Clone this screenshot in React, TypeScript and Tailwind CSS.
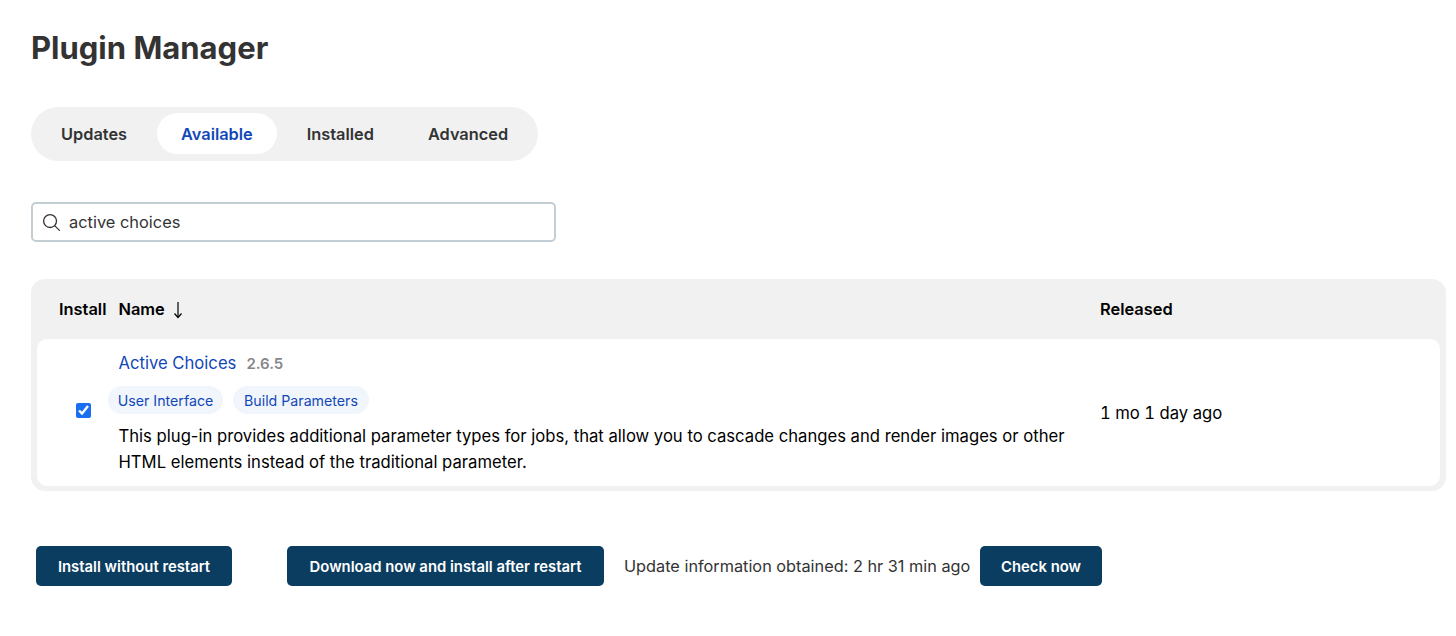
import { IoSearchOutline } from 'react-icons/io5'

const tabs = ['Updates', 'Available', 'Installed', 'Advanced']

function Tabs() {
  return (
    <div className="flex h-[54px] w-[507px] items-center gap-[6px] rounded-[27px] bg-[#f1f1f1] px-[6px] pb-px">
      {tabs.map((tab) => (
        <div
          key={tab}
          className={
            tab === 'Available'
              ? 'flex h-[41px] items-center rounded-[21px] bg-white px-6 pt-[2px] text-[#1148b8]'
              : 'flex h-[41px] items-center rounded-[21px] px-6 pt-[2px] text-[#333333]'
          }
        >
          {tab}
        </div>
      ))}
    </div>
  )
}

function Tag({ label, className }: { label: string; className: string }) {
  return (
    <span className={`flex h-[28px] items-center justify-center rounded-[14px] bg-[#f1f5fc] pt-[2px] text-[14.2px] text-[#1148b8] ${className}`}>
      {label}
    </span>
  )
}

function ActionButton({ label, className }: { label: string; className: string }) {
  return (
    <button className={`flex h-10 items-center justify-center rounded-[5px] bg-[#0b3d60] pt-[2px] text-[14.85px] font-semibold text-white ${className}`}>
      {label}
    </button>
  )
}

function SortArrow() {
  return (
    <svg width="10" height="18" viewBox="0 0 10 18" fill="none" stroke="#000000" strokeWidth="1.2" className="mt-[3px]">
      <path d="M5 1v15" />
      <path d="M1.5 12.5 5 16.5l3.5-4" />
    </svg>
  )
}

export default function App() {
  return (
    <div className="h-[636px] w-[1456px] overflow-hidden bg-white pl-[31px] pr-[10px] font-['Inter',sans-serif]">
      <h1 className="pt-[29px] text-[31px] leading-[38px] font-bold text-[#333333]">Plugin Manager</h1>

      <div className="mt-[40px] text-[16.35px] font-semibold">
        <Tabs />
      </div>

      <div className="mt-[41px] flex h-10 w-[525px] items-center gap-[7px] rounded-[5px] border-2 border-[#c3ced4] pl-[8px]">
        <IoSearchOutline size={21} className="text-[#333333]" />
        <span className="pt-px text-[16.4px] text-[#333333]">active choices</span>
      </div>

      <div className="mt-[37px] rounded-[14px] bg-[#f1f1f1] px-[6px] pb-[5px]">
        <div className="flex h-[60px] items-center text-[16.4px] font-semibold text-black">
          <div className="w-[81.5px] pl-[22px]">Install</div>
          <div className="flex w-[981.5px] items-center gap-[8px]">
            Name
            <SortArrow />
          </div>
          <div>Released</div>
        </div>

        <div className="flex h-[147px] items-center rounded-[10px] bg-white text-black">
          <div className="flex w-[71px] justify-center pb-[5px] pl-[21px]">
            <input type="checkbox" defaultChecked readOnly className="h-[15px] w-[15px] accent-[#1a6ff0]" />
          </div>
          <div className="w-[992px] pt-[2px]">
            <div className="flex items-baseline gap-[10px] pl-[10.5px] pt-px text-[16.65px] leading-5">
              <span className="text-[#1148b8]">Active Choices</span>
              <span className="text-[15px] font-semibold text-[#85878b]">2.6.5</span>
            </div>
            <div className="mt-[12px] flex gap-[10px]">
              <Tag label="User Interface" className="w-[115px]" />
              <Tag label="Build Parameters" className="w-[136px]" />
            </div>
            <p className="mt-[9px] w-[960px] pl-[10.5px] text-[16.65px] leading-[26px]">
              This plug-in provides additional parameter types for jobs, that allow you to cascade changes and render images or other HTML elements instead of the traditional parameter.
            </p>
          </div>
          <div className="pt-[2px] text-[16.65px] tabular-nums">1 mo 1 day ago</div>
        </div>
      </div>

      <div className="mt-[55px] flex items-center pl-[5px]">
        <ActionButton label="Install without restart" className="w-[196px]" />
        <ActionButton label="Download now and install after restart" className="ml-[55px] w-[317px]" />
        <span className="ml-5 w-[346px] whitespace-nowrap text-[16.3px] text-[#333333]">Update information obtained: 2 hr 31 min ago</span>
        <ActionButton label="Check now" className="ml-[10px] w-[122px]" />
      </div>
    </div>
  )
}
